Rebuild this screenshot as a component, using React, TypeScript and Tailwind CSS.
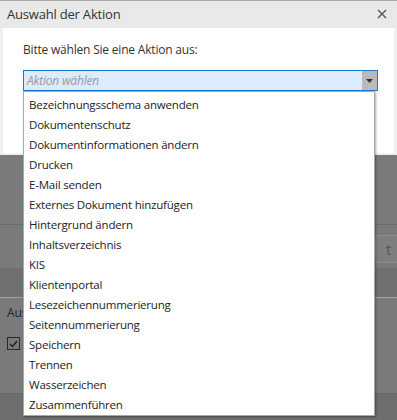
import React from "react";

const items = [
  "Bezeichnungsschema anwenden",
  "Dokumentenschutz",
  "Dokumentinformationen ändern",
  "Drucken",
  "E-Mail senden",
  "Externes Dokument hinzufügen",
  "Hintergrund ändern",
  "Inhaltsverzeichnis",
  "KIS",
  "Klientenportal",
  "Lesezeichennummerierung",
  "Seitennummerierung",
  "Speichern",
  "Trennen",
  "Wasserzeichen",
  "Zusammenführen",
];

export default function App() {
  return (
    <div
      className="relative w-[397px] h-[420px] overflow-hidden bg-[#7a7a7a] text-[11.5px] tracking-[-0.2px] text-[#222]"
      style={{ fontFamily: '"Open Sans", "Noto Sans", sans-serif' }}
    >
      {/* Dialog */}
      <div className="border-t border-[#a9a9a9] bg-[#efefef]">
        <div className="h-[27px] flex items-center justify-between pl-[7px] pr-[10px] bg-[#e9e9e9]">
          <span className="text-[13px] tracking-[-0.2px] text-[#333]">Auswahl der Aktion</span>
          <svg width="10" height="10" viewBox="0 0 10 10" className="mt-[-2px]">
            <path d="M1 1 L9 9 M9 1 L1 9" stroke="#555" strokeWidth="1.4" />
          </svg>
        </div>
        <div className="px-[3px] pb-[2px]">
          <div className="h-[125px] bg-white pl-[20px] pr-[16px] pt-[13px]">
            <div className="h-[17px] leading-[17px] text-[12px] text-[#333]">Bitte wählen Sie eine Aktion aus:</div>
            <div className="mt-[12px] h-[21px] flex border border-[#1a79d6] bg-[#dcebfd]">
              <div className="flex-1 pl-[3px] leading-[19px] text-[12px] italic text-[#9a9a9a]">Aktion wählen</div>
              <div className="w-[15px] bg-[#bababa] flex items-center justify-center">
                <svg width="7" height="4" viewBox="0 0 7 4">
                  <path d="M0 0 L7 0 L3.5 4 Z" fill="#333" />
                </svg>
              </div>
            </div>
          </div>
        </div>
      </div>

      {/* Background (overlayed) page */}
      <div className="h-[69px]" />
      <div className="h-[44px] border-t border-[#696969] flex justify-end pt-[10px]">
        <div className="w-[22px] h-[28px] rounded-l-[4px] border border-r-0 border-[#8c8c8c] bg-[#7e7e7e] pl-[10px] leading-[26px] text-[15px] text-[#555]">
          t
        </div>
      </div>
      <div className="h-[29px] bg-[#707070]" />
      <div className="h-[96px] border-t border-[#a3a3a3] pl-[7px]">
        <div className="pt-[6px] h-[30px] text-[12px] text-[#1b2636]">Aus</div>
        <div className="mt-[9px] w-[13px] h-[13px] border border-[#2a2a2a] flex items-center justify-center">
          <svg width="9" height="8" viewBox="0 0 9 8">
            <path d="M1 4 L3.5 6.5 L8 1" stroke="#222" strokeWidth="1.4" fill="none" />
          </svg>
        </div>
      </div>
      <div className="h-[30px] border-t border-[#666] bg-[#6e6e6e]" />

      {/* Dropdown list */}
      <div className="absolute left-[23px] top-[91px] w-[352px] h-[325px] bg-white border border-[#a8a8a8] shadow-[1px_1px_2px_rgba(0,0,0,0.35)] pt-[3px]">
        {items.map((t) => (
          <div key={t} className="h-[20px] leading-[20px] pl-[5px] text-[#222]">
            {t}
          </div>
        ))}
      </div>
    </div>
  );
}
